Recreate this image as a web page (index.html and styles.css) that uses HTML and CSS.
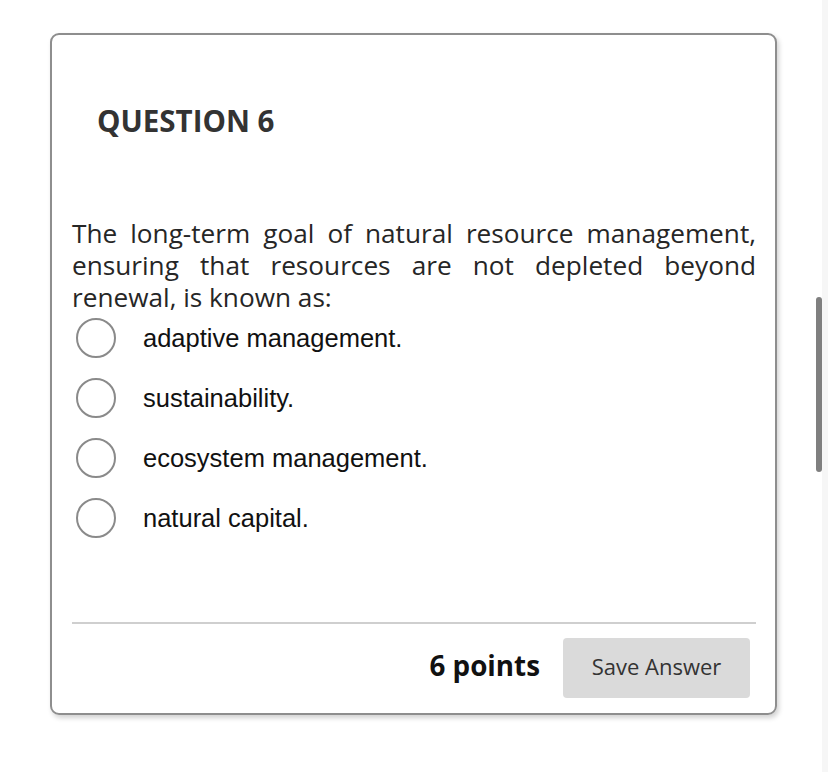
FILE: index.html
```html
<!DOCTYPE html>
<html>
<head>
<meta charset="utf-8">
<link rel="stylesheet" href="styles.css">
</head>
<body>
<div class="page">
  <main class="main">
    <section class="card">
      <h2 class="qtitle">QUESTION 6</h2>
      <p class="qtext">The long-term goal of natural resource management, ensuring that resources are not depleted beyond renewal, is known as:</p>
      <ul class="options">
        <li class="option"><span class="radio"></span><span class="label">adaptive management.</span></li>
        <li class="option"><span class="radio"></span><span class="label">sustainability.</span></li>
        <li class="option"><span class="radio"></span><span class="label">ecosystem management.</span></li>
        <li class="option"><span class="radio"></span><span class="label">natural capital.</span></li>
      </ul>
      <div class="footer">
        <span class="points">6 points</span>
        <button class="save">Save Answer</button>
      </div>
    </section>
  </main>
  <div class="track"></div>
  <div class="thumb"></div>
</div>
</body>
</html>
```
FILE: styles.css
```css
* { box-sizing: border-box; }
html, body { margin: 0; padding: 0; background: #fff; }
body { width: 828px; height: 772px; overflow: hidden; font-family: "Open Sans", sans-serif; }
.page { position: relative; display: flex; width: 828px; height: 772px; }
.main { flex: 1; padding: 33px 0 0 50px; }
.track { width: 6px; height: 772px; background: #f6f6f6; }
.thumb { position: absolute; left: 816px; top: 297px; width: 6px; height: 175px; background: #7f7f7f; border-radius: 3px; }
.card {
  width: 727px;
  height: 682px;
  border: 2px solid #8e8e8e;
  border-radius: 9px;
  box-shadow: 2px 3px 5px rgba(0,0,0,0.18);
  padding: 0 19px 0 20px;
  display: flex;
  flex-direction: column;
}
.qtitle {
  margin: 64px 0 0 25px;
  font-size: 29.5px;
  font-weight: 700;
  line-height: 44px;
  color: #333;
  letter-spacing: 0;
}
.qtext {
  margin: 74px 0 0 0;
  font-size: 26.2px;
  line-height: 32px;
  color: #262626;
  text-align: justify;
}
.options { list-style: none; margin: -5px 0 0 0; padding: 0; }
.option { display: flex; align-items: center; height: 60px; }
.radio {
  width: 40px; height: 40px;
  border: 2.5px solid #8a8a8a;
  border-radius: 50%;
  margin-left: 4px;
  flex: none;
}
.label {
  margin-left: 27px;
  font-family: "Liberation Sans", Arial, sans-serif;
  font-size: 25.5px;
  color: #111;
}
.footer {
  margin-top: 74px;
  border-top: 2px solid #cfcfcf;
  display: flex;
  justify-content: flex-end;
  align-items: center;
  padding-top: 14px;
  padding-right: 6px;
}
.points { font-size: 27.8px; font-weight: 700; color: #111; margin-right: 23px; margin-bottom: 6px; }
.save {
  width: 187px; height: 60px;
  background: #dadada;
  border: none;
  border-radius: 4px;
  padding: 0 0 5px 0;
  font-family: "Open Sans", sans-serif;
  font-size: 22px;
  color: #333;
}
```
